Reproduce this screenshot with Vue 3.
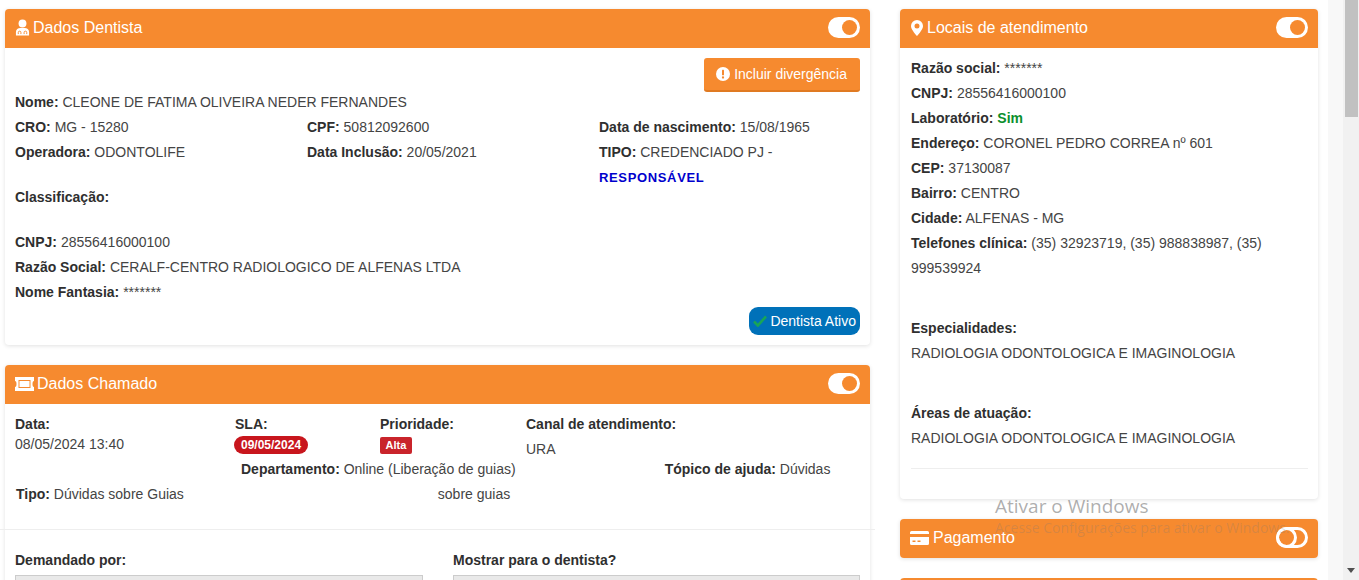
<template>
  <div class="page">
    <main class="content">
      <section class="left-col">
        <div class="card">
          <header class="card-head">
            <h3>
              <svg class="ico" width="15" height="17" viewBox="0 0 16 17">
                <circle cx="8" cy="4.2" r="4.2" fill="#fff" />
                <path d="M1 17v-3.6C1 10.6 3.2 9 5.6 9h4.8C12.8 9 15 10.600 15 13.400V17z" fill="#fff" />
                <path d="M3.500 15.500v-1.700a1.400 1.400 0 0 1 2.800 0v1.700M9.700 15.500v-1.700a1.400 1.400 0 0 1 2.800 0v1.700" fill="none" stroke="#f68a2f" stroke-width="1" />
              </svg>
              Dados Dentista
            </h3>
            <span class="toggle on"></span>
          </header>
          <div class="card-body">
            <div class="actions">
              <button class="btn-orange">
                <svg width="14" height="14" viewBox="0 0 14 14">
                  <circle cx="7" cy="7" r="7" fill="#fff" />
                  <rect x="6" y="2.700" width="2" height="5.600" rx="0.600" fill="#f68a2f" />
                  <circle cx="7" cy="10.500" r="1.150" fill="#f68a2f" />
                </svg>
                Incluir divergência
              </button>
            </div>
            <p class="line"><b>Nome:</b> CLEONE DE FATIMA OLIVEIRA NEDER FERNANDES</p>
            <div class="three-cols">
              <div v-for="cell in dentistCells" :key="cell.label" class="line">
                <b>{{ cell.label }}:</b> {{ cell.value }}
                <b v-if="cell.extra" class="blue">{{ cell.extra }}</b>
              </div>
            </div>
            <p class="line classif"><b>Classificação:</b></p>
            <p class="line"><b>CNPJ:</b> 28556416000100</p>
            <p class="line"><b>Razão Social:</b> CERALF-CENTRO RADIOLOGICO DE ALFENAS LTDA</p>
            <p class="line"><b>Nome Fantasia:</b> *******</p>
            <div class="status-row">
              <span class="btn-status">
                <svg width="14" height="12" viewBox="0 0 14 12">
                  <path d="M1 6.500 4.800 10.500 13 1.500" fill="none" stroke="#18a558" stroke-width="2.600" />
                </svg>
                Dentista Ativo
              </span>
            </div>
          </div>
        </div>

        <div class="card">
          <header class="card-head">
            <h3>
              <svg class="ico" width="19" height="14" viewBox="0 0 19 14">
                <path d="M0 0h19v4a1.500 3 0 0 0 0 6v4H0v-4a1.500 3 0 0 0 0-6z" fill="#fff" />
                <rect x="3.500" y="3" width="12" height="8" fill="#f68a2f" />
                <rect x="4.500" y="4" width="10" height="6" fill="#fff" />
              </svg>
              Dados Chamado
            </h3>
            <span class="toggle on"></span>
          </header>
          <div class="call-body">
            <div class="call-grid">
              <div>
                <b>Data:</b>
                <div>08/05/2024 13:40</div>
              </div>
              <div>
                <b>SLA:</b>
                <div><span class="pill">09/05/2024</span></div>
              </div>
              <div>
                <b>Prioridade:</b>
                <div><span class="tag">Alta</span></div>
              </div>
              <div>
                <b>Canal de atendimento:</b>
                <div class="ura">URA</div>
              </div>
            </div>
            <div class="line row-dept">
              <span><b>Departamento:</b> Online (Liberação de guias)</span>
              <span><b>Tópico de ajuda:</b> Dúvidas</span>
            </div>
            <div class="line row-tipo">
              <span><b>Tipo:</b> Dúvidas sobre Guias</span>
              <span>sobre guias</span>
            </div>
          </div>
          <hr class="wide-hr" />
          <div class="form-grid">
            <div>
              <label>Demandado por:</label>
              <div class="fake-input"></div>
            </div>
            <div>
              <label>Mostrar para o dentista?</label>
              <div class="fake-input"></div>
            </div>
          </div>
        </div>
      </section>

      <aside class="right-col">
        <div class="card">
          <header class="card-head">
            <h3>
              <svg class="ico" width="13" height="16" viewBox="0 0 12 16" preserveAspectRatio="xMaxYMid meet">
                <path fill-rule="evenodd" d="M6 0a6 6 0 0 1 6 6c0 2.800-3.500 7.500-6 10C3.500 13.500 0 8.800 0 6a6 6 0 0 1 6-6zm0 3.500a2.500 2.500 0 1 0 0 5 2.500 2.500 0 0 0 0-5z" fill="#fff" />
              </svg>
              <span class="title-shift">Locais de atendimento</span>
            </h3>
            <span class="toggle on"></span>
          </header>
          <div class="card-body place">
            <p class="line"><b>Razão social:</b> *******</p>
            <p class="line"><b>CNPJ:</b> 28556416000100</p>
            <p class="line"><b>Laboratório:</b> <b class="green">Sim</b></p>
            <p class="line"><b>Endereço:</b> CORONEL PEDRO CORREA nº 601</p>
            <p class="line"><b>CEP:</b> 37130087</p>
            <p class="line"><b>Bairro:</b> CENTRO</p>
            <p class="line"><b>Cidade:</b> ALFENAS - MG</p>
            <p class="line"><b>Telefones clínica:</b> (35) 32923719, (35) 988838987, (35) 999539924</p>
            <p class="line block-gap"><b>Especialidades:</b></p>
            <p class="line">RADIOLOGIA ODONTOLOGICA E IMAGINOLOGIA</p>
            <p class="line block-gap"><b>Áreas de atuação:</b></p>
            <p class="line">RADIOLOGIA ODONTOLOGICA E IMAGINOLOGIA</p>
            <hr class="place-hr" />
          </div>
        </div>

        <div class="card collapsed">
          <header class="card-head">
            <h3>
              <svg class="ico" width="19" height="14" viewBox="0 0 19 14">
                <path d="M1.500 0h16A1.500 1.500 0 0 1 19 1.500V3H0V1.500A1.500 1.500 0 0 1 1.500 0z" fill="#fff" />
                <path fill-rule="evenodd" d="M0 6h19v6.500a1.500 1.500 0 0 1-1.500 1.500h-16A1.500 1.500 0 0 1 0 12.500zm2.500 3.500v1.500h3V9.500zm5 0v1.500h3V9.500z" fill="#fff" />
              </svg>
              <span class="title-shift">Pagamento</span>
            </h3>
            <span class="toggle off"></span>
          </header>
        </div>

        <div class="card-next"></div>
      </aside>
    </main>

    <div class="side-strip"></div>

    <div class="scrollbar">
      <div class="thumb"></div>
      <span class="arrow"></span>
    </div>

    <div class="watermark">
      <div class="wm-title">Ativar o Windows</div>
      <div class="wm-sub">Acesse Configurações para ativar o Windows.</div>
    </div>
  </div>
</template>

<script setup>
// células da grade de três colunas do dentista
const dentistCells = [
  { label: 'CRO', value: 'MG - 15280' },
  { label: 'CPF', value: '50812092600' },
  { label: 'Data de nascimento', value: '15/08/1965' },
  { label: 'Operadora', value: 'ODONTOLIFE' },
  { label: 'Data Inclusão', value: '20/05/2021' },
  { label: 'TIPO', value: 'CREDENCIADO PJ -', extra: 'RESPONSÁVEL' },
]
</script>

<style>
html,
body {
  margin: 0;
  overflow: hidden;
  background: #fff;
}
</style>

<style scoped>
.page {
  position: relative;
  display: flex;
  height: 580px;
  overflow: hidden;
  font-family: 'Liberation Sans', Arial, sans-serif;
  font-size: 14px;
  color: #444;
}

.page b,
.page label {
  color: #2f2f2f;
}

.content {
  display: flex;
  gap: 30px;
  width: 1328px;
  padding: 9px 10px 0 5px;
  box-sizing: border-box;
}

.left-col {
  width: 865px;
  flex: none;
}

.right-col {
  width: 418px;
  flex: none;
}

.side-strip {
  width: 15px;
  background: #f8f8f8;
}

.scrollbar {
  position: relative;
  width: 16px;
  background: #f1f1f1;
}

.thumb {
  width: 13px;
  height: 117px;
  margin-left: 2px;
  background: #c1c1c1;
}

.arrow {
  position: absolute;
  left: 4px;
  bottom: 7px;
  border-left: 4px solid transparent;
  border-right: 4px solid transparent;
  border-top: 5px solid #505050;
}

.card {
  margin-bottom: 20px;
  background: #fff;
  border-radius: 4px;
  box-shadow: 0 1px 4px rgba(0, 0, 0, 0.12);
}

.card-head {
  display: flex;
  align-items: center;
  justify-content: space-between;
  height: 39px;
  padding: 0 10px 2px;
  box-sizing: border-box;
  background: #f68a2f;
  border-radius: 4px 4px 0 0;
  color: #fff;
}

.collapsed .card-head {
  border-radius: 4px;
}

.card-head h3 {
  display: flex;
  align-items: center;
  gap: 3px;
  margin: 0;
  font-size: 16px;
  font-weight: 400;
}

.title-shift {
  margin-left: 1px;
}

.toggle {
  position: relative;
  display: block;
  width: 32px;
  height: 21px;
  box-sizing: border-box;
  border-radius: 11px;
}

.toggle::after {
  content: '';
  position: absolute;
  border-radius: 50%;
}

.toggle.on {
  background: #fff;
}

.toggle.on::after {
  top: 3px;
  right: 3px;
  width: 15px;
  height: 15px;
  background: #f68a2f;
}

.toggle.off {
  border: 3px solid #fff;
}

.toggle.off::after {
  top: -3px;
  left: -3px;
  width: 21px;
  height: 21px;
  box-sizing: border-box;
  border: 3px solid #fff;
}

.card-body {
  padding: 10px;
}

.actions {
  display: flex;
  justify-content: flex-end;
  height: 32px;
}

.btn-orange {
  display: flex;
  align-items: center;
  gap: 4px;
  height: 34px;
  padding: 0 13px 0 12px;
  background: #f68a2f;
  border: 0;
  border-bottom: 2px solid #e07a22;
  border-radius: 3px;
  color: #fff;
  font: 14px 'Liberation Sans', Arial, sans-serif;
}

.line {
  margin: 0;
  line-height: 25px;
}

.three-cols {
  display: grid;
  grid-template-columns: repeat(3, 292px);
}

.three-cols .line {
  max-width: 261px;
}

.page .blue {
  display: block;
  color: #0000cd;
  font-size: 13px;
  letter-spacing: 0.65px;
}

.classif {
  margin: -5px 0 20px;
}

.status-row {
  display: flex;
  justify-content: flex-end;
  margin-top: 2px;
}

.btn-status {
  display: flex;
  align-items: center;
  gap: 3px;
  height: 28px;
  padding: 0 4px;
  background: #0071b9;
  border-radius: 9px;
  color: #fff;
}

.call-body {
  padding: 10px 10px 0;
}

.call-grid {
  display: grid;
  grid-template-columns: 220px 145px 146px 1fr;
  height: 43px;
  line-height: 20px;
}

.pill {
  display: inline-block;
  margin: 2px 0 0 -1px;
  padding: 0 7px;
  height: 18px;
  line-height: 18px;
  background: #c8161d;
  border-radius: 9px;
  color: #fff;
  font-size: 12px;
  font-weight: 700;
}

.tag {
  display: inline-block;
  margin-top: 3px;
  padding: 0 5.500px;
  height: 17px;
  line-height: 17px;
  background: #c9242b;
  border-radius: 2px;
  color: #fff;
  font-size: 11px;
  font-weight: 700;
}

.ura {
  margin-top: 5px;
}

.row-dept {
  display: flex;
  gap: 149px;
  padding-left: 226px;
}

.row-tipo {
  display: flex;
  gap: 254px;
  padding-left: 1px;
}

.wide-hr {
  margin: 22px -5px 0 -5px;
  border: 0;
  border-top: 1px solid #eee;
}

.form-grid {
  display: grid;
  grid-template-columns: 408px 407px;
  gap: 30px;
  padding: 18px 10px 0;
}

.form-grid label {
  display: block;
  line-height: 25px;
  font-weight: 700;
}

.fake-input {
  height: 34px;
  margin-top: 2px;
  background: #e9e9e9;
  border: 1px solid #ccc;
  box-sizing: border-box;
}

.place {
  padding: 8px 10px 30px 11px;
}

.block-gap {
  margin-top: 35px;
}

.place-hr {
  margin: 17px 0 0;
  border: 0;
  border-top: 1px solid #eee;
}

.page .green {
  color: #0b8f2c;
}

.card-next {
  height: 40px;
  margin-top: 0;
  background: #f68a2f;
  border-radius: 4px 4px 0 0;
}

.watermark {
  position: absolute;
  left: 995px;
  top: 494px;
  pointer-events: none;
  font-family: 'Open Sans', sans-serif;
}

.wm-title {
  font-size: 19px;
  line-height: 25px;
  color: rgba(120, 120, 120, 0.6);
}

.wm-sub {
  font-size: 14px;
  line-height: 18px;
  color: rgba(120, 120, 120, 0.25);
}
</style>
